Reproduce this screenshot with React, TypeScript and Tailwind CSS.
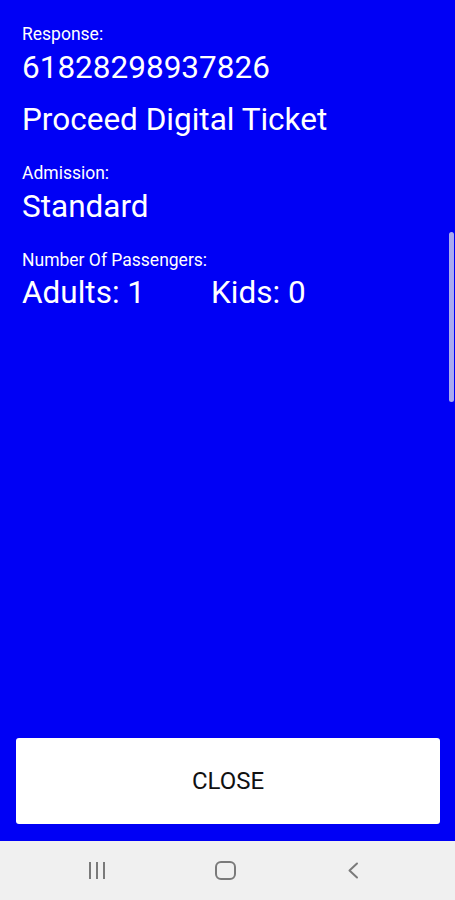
export default function App() {
  return (
    <div className="flex h-[900px] w-[455px] flex-col bg-[#0000f5] font-['Roboto',sans-serif]">
      {/* contenido */}
      <div className="relative flex-1">
        <div className="px-[22px] pt-[23px] text-white">
          <p className="text-[17.5px] leading-[22px]">Response:</p>
          <p className="mt-[5px] text-[31.5px] leading-[36px]">61828298937826</p>
          <p className="mt-[16px] text-[31.5px] leading-[36px]">Proceed Digital Ticket</p>
          <p className="mt-[24px] text-[17.5px] leading-[22px]">Admission:</p>
          <p className="mt-[5px] text-[31.5px] leading-[36px]">Standard</p>
          <p className="mt-[24px] text-[17.5px] leading-[22px]">Number Of Passengers:</p>
          <div className="mt-[4px] flex text-[31.5px] leading-[36px]">
            <span className="w-[189px]">Adults: 1</span>
            <span>Kids: 0</span>
          </div>
        </div>
        {/* barra de scroll */}
        <div className="absolute right-[1px] top-[232px] h-[170px] w-[5px] rounded-full bg-[#a9aaf0]" />
      </div>

      {/* boton cerrar */}
      <div className="pb-[17px] pl-[16px] pr-[15px]">
        <button className="flex h-[86px] w-full items-center justify-center rounded-[3px] bg-white text-[24px] text-[#111]">
          CLOSE
        </button>
      </div>

      {/* navegacion android */}
      <div className="flex h-[59px] items-center bg-[#f0f0f0]">
        <div className="flex w-full items-center">
          <div className="ml-[89px] flex h-[17px] gap-[5px]">
            <span className="h-full w-[2px] bg-[#7a7a7a]" />
            <span className="h-full w-[2px] bg-[#7a7a7a]" />
            <span className="h-full w-[2px] bg-[#7a7a7a]" />
          </div>
          <div className="ml-[110px] h-[19px] w-[21px] rounded-[6px] border-2 border-[#7a7a7a]" />
          <svg className="ml-[111px]" width="12" height="17" viewBox="0 0 12 17">
            <path d="M10 1.5 L2.5 8.5 L10 15.5" fill="none" stroke="#7a7a7a" strokeWidth="2" strokeLinecap="round" strokeLinejoin="round" />
          </svg>
        </div>
      </div>
    </div>
  );
}
